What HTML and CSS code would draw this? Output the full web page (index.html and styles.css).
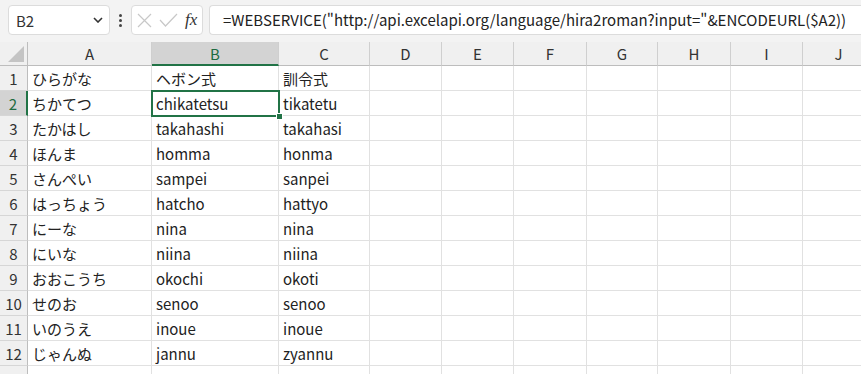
FILE: index.html
```html
<!DOCTYPE html>
<html lang="ja">
<head>
  <meta charset="UTF-8">
  <title>Excel - WEBSERVICE</title>
  <link rel="stylesheet" href="styles.css">
</head>
<body>
  <div class="formula-bar">
    <div class="name-box">
      <span>B2</span>
      <svg class="chev" width="10" height="6" viewBox="0 0 10 6"><path d="M1 1l4 4 4-4" fill="none" stroke="#333" stroke-width="1.6"/></svg>
    </div>
    <div class="vdots"><i></i><i></i><i></i></div>
    <div class="fx-box">
      <svg width="15" height="15" viewBox="0 0 15 15"><path d="M1 1l13 13M14 1L1 14" stroke="#c8c8c8" stroke-width="1.2"/></svg>
      <svg width="19" height="15" viewBox="0 0 19 15"><path d="M1 7l5.5 6L18 1" fill="none" stroke="#c8c8c8" stroke-width="1.2"/></svg>
      <span class="fx">fx</span>
    </div>
    <div class="formula-input">=WEBSERVICE("http://api.excelapi.org/language/hira2roman?input="&amp;ENCODEURL($A2))</div>
  </div>

  <div class="sheet">
    <div class="grid" id="grid">
      <div class="corner"></div>
      <div class="col-head">A</div>
      <div class="col-head active">B</div>
      <div class="col-head">C</div>
      <div class="col-head">D</div>
      <div class="col-head">E</div>
      <div class="col-head">F</div>
      <div class="col-head">G</div>
      <div class="col-head">H</div>
      <div class="col-head">I</div>
      <div class="col-head">J</div>
    </div>
    <div class="selection"><span class="handle"></span></div>
  </div>

  <script>
    // rows: hiragana, hepburn, kunrei
    const rows = [
      ['ひらがな', 'ヘボン式', '訓令式'],
      ['ちかてつ', 'chikatetsu', 'tikatetu'],
      ['たかはし', 'takahashi', 'takahasi'],
      ['ほんま', 'homma', 'honma'],
      ['さんぺい', 'sampei', 'sanpei'],
      ['はっちょう', 'hatcho', 'hattyo'],
      ['にーな', 'nina', 'nina'],
      ['にいな', 'niina', 'niina'],
      ['おおこうち', 'okochi', 'okoti'],
      ['せのお', 'senoo', 'senoo'],
      ['いのうえ', 'inoue', 'inoue'],
      ['じゃんぬ', 'jannu', 'zyannu'],
      ['', '', '']
    ];
    const grid = document.getElementById('grid');
    rows.forEach((r, i) => {
      const head = document.createElement('div');
      head.className = 'row-head' + (i === 1 ? ' active' : '');
      // last row is cut by the window edge, its number is not visible
      head.textContent = i < 12 ? i + 1 : '';
      grid.appendChild(head);
      for (let c = 0; c < 10; c++) {
        const cell = document.createElement('div');
        cell.className = 'cell';
        cell.textContent = r[c] || '';
        grid.appendChild(cell);
      }
    });
  </script>
</body>
</html>
```

FILE: styles.css
```css
* {
  box-sizing: border-box;
}
body {
  margin: 0;
  background: #fff;
  color: #222;
  font-family: "Noto Sans CJK JP", "Noto Sans", sans-serif;
  overflow: hidden;
}
.formula-bar {
  display: flex;
  align-items: flex-start;
  height: 42px;
  padding: 5px 0 0 8px;
  background: #f3f3f3;
}
.name-box {
  display: flex;
  align-items: center;
  justify-content: space-between;
  width: 102px;
  height: 30px;
  padding: 0 6px 0 7px;
  background: #fff;
  border: 1px solid #dcdcdc;
  border-radius: 4px;
  font-size: 15px;
  color: #333;
}
.vdots {
  display: flex;
  flex-direction: column;
  gap: 2px;
  width: 21px;
  padding-top: 9px;
  align-items: center;
}
.vdots i {
  width: 3px;
  height: 3px;
  background: #444;
  border-radius: 50%;
}
.fx-box {
  display: flex;
  align-items: center;
  gap: 7px;
  width: 72px;
  height: 30px;
  padding: 0 4px 0 5px;
  background: #fff;
  border: 1px solid #dcdcdc;
  border-radius: 4px;
}
.fx {
  font-family: "Liberation Serif", serif;
  font-style: italic;
  font-size: 17px;
  color: #333;
}
.formula-input {
  flex: 1;
  height: 30px;
  margin-left: 6px;
  padding: 3px 0 0 13px;
  background: #fff;
  border: 1px solid #dcdcdc;
  border-right: none;
  border-radius: 4px 0 0 4px;
  font-size: 15px;
  color: #222;
  white-space: nowrap;
  overflow: hidden;
}
.sheet {
  position: relative;
  background: #f3f3f3;
}
.grid {
  display: grid;
  grid-template-columns: 28px 124px 127px 91px 72px 72px 73px 71px 73px 72px 72px;
  grid-template-rows: 24px;
  grid-auto-rows: 25px;
  width: 875px;
  background: #fff;
}
.corner {
  position: relative;
  background: #f0f0f0;
  border-right: 1px solid #bdbdbd;
  border-bottom: 1px solid #bdbdbd;
}
.corner::after {
  content: "";
  position: absolute;
  right: 3px;
  bottom: 3px;
  border-style: solid;
  border-width: 0 0 16px 16px;
  border-color: transparent transparent #c4c4c4 transparent;
}
.col-head {
  display: flex;
  align-items: center;
  justify-content: center;
  background: #f0f0f0;
  border-right: 1px solid #cfcfcf;
  border-bottom: 1px solid #bdbdbd;
  font-size: 15px;
  color: #333;
}
.col-head.active {
  background: #d3d3d3;
  color: #1e6b41;
  border-bottom: 2px solid #217346;
}
.row-head {
  display: flex;
  align-items: center;
  justify-content: center;
  background: #f0f0f0;
  border-right: 1px solid #bdbdbd;
  border-bottom: 1px solid #d6d6d6;
  font-size: 15px;
  color: #333;
}
.row-head.active {
  background: #d3d3d3;
  color: #1e6b41;
  border-right: 2px solid #217346;
}
.cell {
  display: flex;
  align-items: center;
  padding: 0 4px;
  border-right: 1px solid #e1e1e1;
  border-bottom: 1px solid #e1e1e1;
  font-size: 15px;
  color: #222;
  white-space: nowrap;
}
.selection {
  position: absolute;
  left: 151px;
  top: 48px;
  width: 129px;
  height: 27px;
  border: 2px solid #217346;
}
.handle {
  position: absolute;
  right: -5px;
  bottom: -5px;
  width: 7px;
  height: 7px;
  background: #217346;
  border: 1px solid #fff;
}
```
